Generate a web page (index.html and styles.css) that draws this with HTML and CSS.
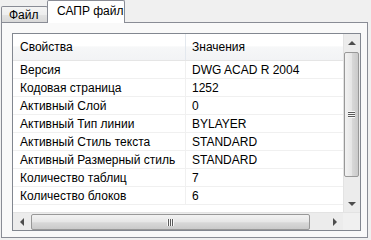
FILE: index.html
```html
<!DOCTYPE html>
<html>
<head>
    <meta charset="utf-8" />
    <title>САПР файл</title>
    <link rel="stylesheet" href="styles.css">
</head>
<body>
    <div class="tabs">
        <div class="tab">Файл</div>
        <div class="tab active">САПР файл</div>
    </div>
    <div class="panel">
        <div class="list">
            <div class="view">
                <div class="rows">
                    <div class="row head">
                        <div class="cell name">Свойства</div>
                        <div class="cell value">Значения</div>
                    </div>
                    <div class="row"><div class="cell name">Версия</div><div class="cell value">DWG ACAD R 2004</div></div>
                    <div class="row"><div class="cell name">Кодовая страница</div><div class="cell value">1252</div></div>
                    <div class="row"><div class="cell name">Активный Слой</div><div class="cell value">0</div></div>
                    <div class="row"><div class="cell name">Активный Тип линии</div><div class="cell value">BYLAYER</div></div>
                    <div class="row"><div class="cell name">Активный Стиль текста</div><div class="cell value">STANDARD</div></div>
                    <div class="row"><div class="cell name">Активный Размерный стиль</div><div class="cell value">STANDARD</div></div>
                    <div class="row"><div class="cell name">Количество таблиц</div><div class="cell value">7</div></div>
                    <div class="row"><div class="cell name">Количество блоков</div><div class="cell value">6</div></div>
                </div>
                <div class="vscroll">
                    <div class="btn"><span class="arrow up"></span></div>
                    <div class="vtrack">
                        <div class="thumb vthumb"><span class="grip"></span></div>
                    </div>
                    <div class="btn"><span class="arrow down"></span></div>
                </div>
            </div>
            <div class="hscroll">
                <div class="btn"><span class="arrow left"></span></div>
                <div class="htrack">
                    <div class="thumb hthumb"><span class="grip"></span></div>
                </div>
                <div class="btn"><span class="arrow right"></span></div>
                <div class="corner"></div>
            </div>
        </div>
    </div>
</body>
</html>
```

FILE: styles.css
```css
body {
    margin: 0;
    background: #f0f0f0;
    font-family: "Liberation Sans", Arial, sans-serif;
    font-size: 12px;
    color: #000;
}

/* tabs */
.tabs {
    display: flex;
    align-items: flex-end;
    height: 22px;
    padding-left: 1px;
}

.tab {
    box-sizing: border-box;
    height: 16px;
    width: 47px;
    padding: 2px 0 0 7px;
    border: 1px solid #898c95;
    border-bottom: none;
    border-radius: 2px 2px 0 0;
    background: linear-gradient(#f4f4f4, #eeeeee 50%, #e3e3e3 51%, #d8d8d8);
    line-height: 13px;
}

.tab.active {
    height: 23px;
    width: 78px;
    margin-bottom: -1px;
    margin-left: -1px;
    padding: 4px 0 0 9px;
    background: #ffffff;
    position: relative;
    z-index: 1;
}

/* tab page */
.panel {
    box-sizing: border-box;
    width: 367px;
    height: 216px;
    margin-left: 1px;
    padding: 10px 6px 6px 10px;
    border: 1px solid #898c95;
    background: #f9f9f9;
}

.list {
    border: 1px solid #828790;
    background: #fff;
}

.view {
    display: flex;
    height: 178px;
}

.rows {
    flex: 1;
    overflow: hidden;
}

.row {
    display: flex;
    height: 17px;
    border-bottom: 1px solid #f0f0f0;
    line-height: 18px;
}

.row.head {
    height: 26px;
    line-height: 27px;
    border-bottom: 1px solid #e5e5e5;
    background: linear-gradient(#ffffff, #ffffff 45%, #f6f7f8 50%, #f2f3f5);
}

.cell {
    white-space: nowrap;
    overflow: hidden;
}

.cell.name {
    width: 165px;
    padding-left: 7px;
    border-right: 1px solid #f0f0f0;
}

.row.head .cell.name {
    border-right-color: #e3e8ee;
}

.cell.value {
    flex: 1;
    padding-left: 6px;
}

/* scrollbars */
.vscroll {
    display: flex;
    flex-direction: column;
    width: 17px;
    background: #ececec;
    border-left: 1px solid #e3e3e3;
    box-sizing: border-box;
}

.btn {
    display: flex;
    align-items: center;
    justify-content: center;
    width: 17px;
    height: 17px;
    flex: none;
}

.vscroll .btn {
    width: 16px;
}

.vtrack {
    flex: 1;
    padding: 1px 1px 0 0;
}

.htrack {
    flex: 1;
    padding: 1px 0 0 1px;
}

.thumb {
    box-sizing: border-box;
    border: 1px solid #989898;
    border-radius: 2px;
    display: flex;
    align-items: center;
    justify-content: center;
}

.vthumb {
    height: 125px;
    background: linear-gradient(90deg, #f2f2f2, #e6e6e6 50%, #d8d8d8 55%, #cacaca);
}

.hthumb {
    width: 279px;
    height: 16px;
    background: linear-gradient(#f2f2f2, #e6e6e6 50%, #d8d8d8 55%, #cacaca);
}

.vthumb .grip {
    width: 7px;
    height: 7px;
    background: repeating-linear-gradient(#f8f8f8 0 1px, #5a5a5a 1px 2px);
}

.hthumb .grip {
    width: 7px;
    height: 7px;
    background: repeating-linear-gradient(90deg, #f8f8f8 0 1px, #5a5a5a 1px 2px);
}

.arrow {
    width: 0;
    height: 0;
}

.arrow.up {
    border-left: 4px solid transparent;
    border-right: 4px solid transparent;
    border-bottom: 4px solid #4d4d4d;
}

.arrow.down {
    border-left: 4px solid transparent;
    border-right: 4px solid transparent;
    border-top: 4px solid #4d4d4d;
}

.arrow.left {
    border-top: 4px solid transparent;
    border-bottom: 4px solid transparent;
    border-right: 4px solid #4d4d4d;
}

.arrow.right {
    border-top: 4px solid transparent;
    border-bottom: 4px solid transparent;
    border-left: 4px solid #4d4d4d;
}

.hscroll {
    display: flex;
    height: 17px;
    background: #ececec;
    border-top: 1px solid #e3e3e3;
}

.corner {
    width: 17px;
    background: #f0f0f0;
}
```
